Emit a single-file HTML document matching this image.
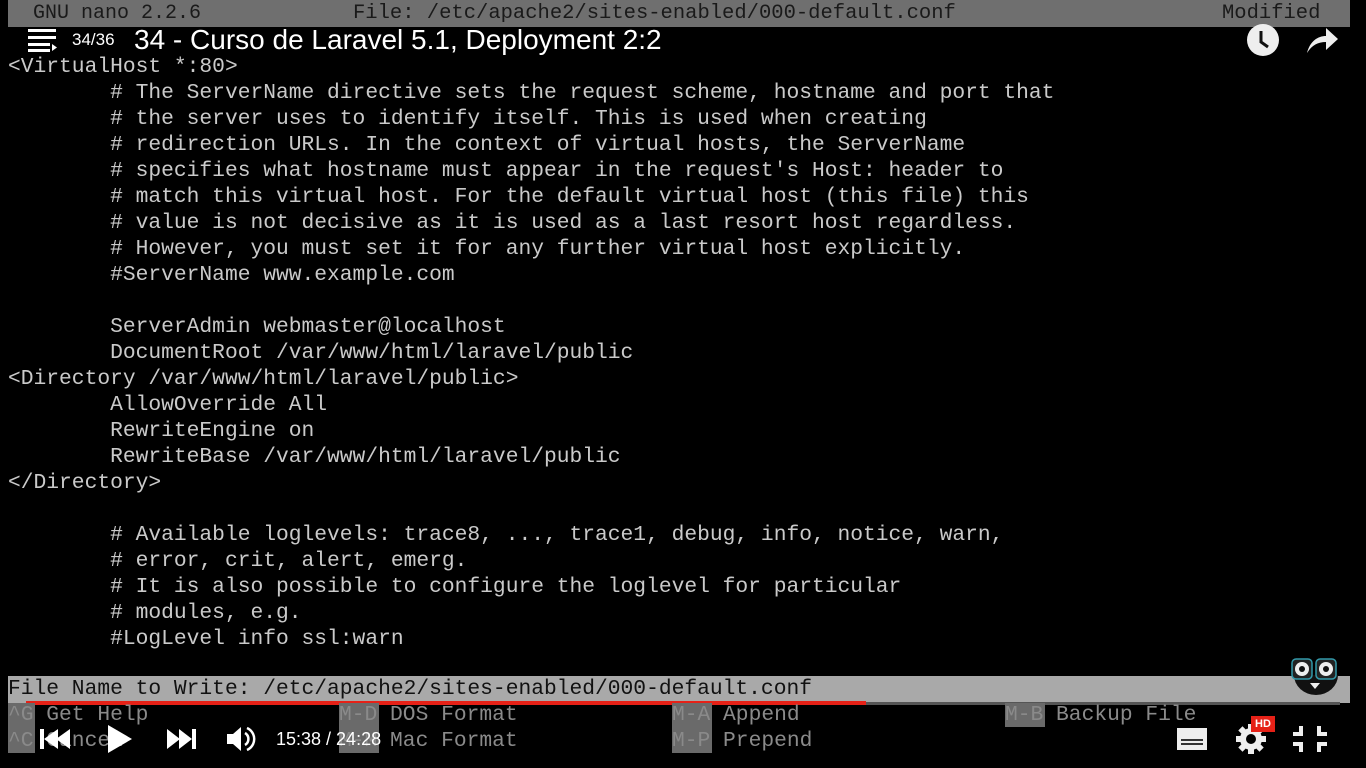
<!DOCTYPE html>
<html><head><style>
body{margin:0;width:1366px;height:768px;background:#000;overflow:hidden;position:relative;font-family:"Liberation Mono",monospace}
.t{position:absolute;white-space:pre;font-size:21.28px;color:#cacaca;line-height:26px}
.a{position:absolute}
.w{font-family:"Liberation Sans",sans-serif;color:#fff;position:absolute;white-space:pre}
.k{position:absolute;background:#6a6a6a;height:24px}
.s{color:#8a8a8a}
</style></head><body>
<div class="a" style="left:8px;top:0;width:1342px;height:27px;background:#6f6f6f"></div>
<div class="t" style="left:33px;top:1px;color:#1a1a1a;font-size:20px">GNU nano 2.2.6</div>
<div class="t" style="left:353px;top:1px;color:#1a1a1a;font-size:20.5px">File: /etc/apache2/sites-enabled/000-default.conf</div>
<div class="t" style="left:1222px;top:1px;color:#1a1a1a;font-size:20.5px">Modified</div>

<div class="t" style="left:8px;top:54px">&lt;VirtualHost *:80&gt;
        # The ServerName directive sets the request scheme, hostname and port that
        # the server uses to identify itself. This is used when creating
        # redirection URLs. In the context of virtual hosts, the ServerName
        # specifies what hostname must appear in the request's Host: header to
        # match this virtual host. For the default virtual host (this file) this
        # value is not decisive as it is used as a last resort host regardless.
        # However, you must set it for any further virtual host explicitly.
        #ServerName www.example.com

        ServerAdmin webmaster@localhost
        DocumentRoot /var/www/html/laravel/public
&lt;Directory /var/www/html/laravel/public&gt;
        AllowOverride All
        RewriteEngine on
        RewriteBase /var/www/html/laravel/public
&lt;/Directory&gt;

        # Available loglevels: trace8, ..., trace1, debug, info, notice, warn,
        # error, crit, alert, emerg.
        # It is also possible to configure the loglevel for particular
        # modules, e.g.
        #LogLevel info ssl:warn</div>

<div class="a" style="left:8px;top:676px;width:1342px;height:27px;background:#a9a9a9"></div>
<div class="t" style="left:8px;top:676px;color:#111">File Name to Write: /etc/apache2/sites-enabled/000-default.conf</div>
<div class="a" style="left:26px;top:701px;width:840px;height:4px;background:#e62117"></div>
<div class="a" style="left:866px;top:702px;width:474px;height:3px;background:#555"></div>

<div class="k" style="left:8px;top:703px;width:27px;height:50px"></div>
<div class="k" style="left:339px;top:703px;width:40px;height:50px"></div>
<div class="k" style="left:672px;top:703px;width:40px;height:50px"></div>
<div class="k" style="left:1005px;top:703px;width:40px"></div>
<div class="t s" style="left:8px;top:702px">^G Get Help
^C Cancel</div>
<div class="t s" style="left:339px;top:702px">M-D DOS Format
M-M Mac Format</div>
<div class="t s" style="left:672px;top:702px">M-A Append
M-P Prepend</div>
<div class="t s" style="left:1005px;top:702px">M-B Backup File</div>

<!-- top overlay -->
<svg class="a" style="left:28px;top:28px" width="30" height="24" viewBox="0 0 30 24"><rect x="0" y="1" width="28" height="3" fill="#fff"/><rect x="0" y="8" width="28" height="3" fill="#fff"/><rect x="0" y="15" width="22" height="3" fill="#fff"/><rect x="0" y="21" width="22" height="3" fill="#fff"/><path d="M24 16l5 3.5-5 3.5z" fill="#fff"/></svg>
<div class="w" style="left:72px;top:30px;font-size:17px">34/36</div>
<div class="w" style="left:134px;top:24px;font-size:28px">34 - Curso de Laravel 5.1, Deployment 2:2</div>
<svg class="a" style="left:1246px;top:23px" width="34" height="34" viewBox="0 0 34 34"><circle cx="17" cy="17" r="16" fill="#eee"/><path d="M15 8v11l7 5" stroke="#111" stroke-width="3" fill="none"/></svg>
<svg class="a" style="left:1305px;top:25px" width="34" height="30" viewBox="0 0 34 30"><path d="M2 28C5 16 13 11 21 11V3l12 11-12 11v-8C13 17 7 20 2 28z" fill="#eee"/></svg>

<!-- bottom controls -->
<svg class="a" style="left:38px;top:727px" width="36" height="24" viewBox="0 0 36 24"><rect x="2" y="2" width="4" height="20" fill="#fff"/><path d="M6 12l14-10v20zM18 12l14-10v20z" fill="#fff"/></svg>
<svg class="a" style="left:106px;top:724px" width="28" height="30" viewBox="0 0 28 30"><path d="M2 1l24 14-24 14z" fill="#fff"/></svg>
<svg class="a" style="left:166px;top:727px" width="32" height="24" viewBox="0 0 32 24"><path d="M1 2l13 10-13 10zM13 2l13 10-13 10z" fill="#fff"/><rect x="26" y="2" width="4" height="20" fill="#fff"/></svg>
<svg class="a" style="left:226px;top:724px" width="30" height="30" viewBox="0 0 30 30"><path d="M1 10h6l8-7v24l-8-7H1z" fill="#fff"/><path d="M19 9a7 7 0 0 1 0 12M21 4a12 12 0 0 1 0 22" stroke="#fff" stroke-width="2.5" fill="none"/></svg>
<div class="w" style="left:276px;top:729px;font-size:18px">15:38 / 24:28</div>
<svg class="a" style="left:1176px;top:727px" width="32" height="24" viewBox="0 0 32 24"><rect x="1" y="1" width="30" height="22" fill="#eee"/><rect x="5" y="12" width="22" height="2" fill="#333"/><rect x="5" y="16" width="22" height="2" fill="#333"/></svg>
<svg class="a" style="left:1234px;top:722px" width="34" height="34" viewBox="0 0 34 34"><g fill="#eee"><circle cx="17" cy="17" r="11"/><rect x="14" y="2" width="6" height="30"/><rect x="2" y="14" width="30" height="6"/><rect x="14" y="2" width="6" height="30" transform="rotate(45 17 17)"/><rect x="14" y="2" width="6" height="30" transform="rotate(-45 17 17)"/></g><circle cx="17" cy="17" r="5" fill="#000"/></svg>
<div class="a" style="left:1251px;top:716px;width:24px;height:16px;background:#e62117;color:#fff;font:bold 11px 'Liberation Sans',sans-serif;text-align:center;line-height:16px">HD</div>
<svg class="a" style="left:1291px;top:724px" width="38" height="30" viewBox="0 0 38 30"><g fill="#eee"><path d="M8 2h4v10H2V8h6z"/><path d="M26 2h4v6h6v4H26z"/><path d="M2 18h10v10H8v-6H2z"/><path d="M26 18h10v4h-6v6h-4z"/></g></svg>
<svg class="a" style="left:1290px;top:657px" width="52" height="40" viewBox="0 0 52 40"><path d="M4 18a22 20 0 0 0 44 0z" fill="#111"/><rect x="2" y="2" width="20" height="20" rx="4" fill="#222" stroke="#39a" stroke-width="1.5"/><rect x="26" y="2" width="20" height="20" rx="4" fill="#222" stroke="#39a" stroke-width="1.5"/><circle cx="12" cy="12" r="7" fill="#eee"/><circle cx="36" cy="12" r="7" fill="#eee"/><circle cx="12" cy="12" r="3" fill="#111"/><circle cx="36" cy="12" r="3" fill="#111"/><path d="M20 26h10l-5 6z" fill="#eee"/></svg>
</body></html>
